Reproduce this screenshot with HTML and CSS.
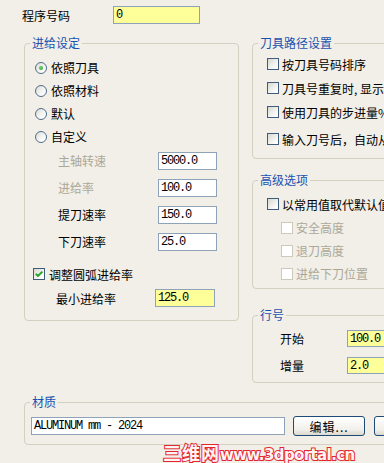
FILE: index.html
```html
<!DOCTYPE html>
<html lang="zh-CN">
<head>
    <meta charset="UTF-8">
    <title>刀具路径参数</title>
    <link rel="stylesheet" href="styles.css">
</head>
<body>
    <div class="dialog">
        <div class="prog-row">
            <span class="prog-label">程序号码</span>
            <span class="field yellow prog-input">0</span>
        </div>

        <div class="main">
            <!-- 进给设定 -->
            <fieldset class="group feed">
                <legend>进给设定</legend>
                <div class="group-body">
                    <div class="radio-row"><span class="radio on"></span>依照刀具</div>
                    <div class="radio-row"><span class="radio"></span>依照材料</div>
                    <div class="radio-row"><span class="radio"></span>默认</div>
                    <div class="radio-row"><span class="radio"></span>自定义</div>
                    <div class="fields">
                        <div class="field-row"><span class="field-label disabled">主轴转速</span><span class="field feed-input">5000.0</span></div>
                        <div class="field-row"><span class="field-label disabled">进给率</span><span class="field feed-input">100.0</span></div>
                        <div class="field-row"><span class="field-label">提刀速率</span><span class="field feed-input">150.0</span></div>
                        <div class="field-row"><span class="field-label">下刀速率</span><span class="field feed-input">25.0</span></div>
                    </div>
                    <div class="check-row arc-row">
                        <span class="check"><svg width="10" height="10" viewBox="0 0 10 10"><path d="M1.8 4.8 L4 7 L8.4 2.6" fill="none" stroke="#21a121" stroke-width="1.9"/></svg></span>调整圆弧进给率
                    </div>
                    <div class="field-row min-row"><span class="field-label">最小进给率</span><span class="field yellow feed-input">125.0</span></div>
                </div>
            </fieldset>

            <div class="right-col">
                <fieldset class="group path">
                    <legend>刀具路径设置</legend>
                    <div class="group-body">
                        <div class="check-row"><span class="check"></span>按刀具号码排序</div>
                        <div class="check-row"><span class="check"></span>刀具号重复时, 显示警告</div>
                        <div class="check-row"><span class="check"></span>使用刀具的步进量%</div>
                        <div class="check-row last"><span class="check"></span>输入刀号后，自动从刀库</div>
                    </div>
                </fieldset>

                <fieldset class="group adv">
                    <legend>高级选项</legend>
                    <div class="group-body">
                        <div class="check-row"><span class="check"></span>以常用值取代默认值</div>
                        <div class="check-row sub disabled"><span class="check off"></span>安全高度</div>
                        <div class="check-row sub disabled"><span class="check off"></span>退刀高度</div>
                        <div class="check-row sub disabled"><span class="check off"></span>进给下刀位置</div>
                    </div>
                </fieldset>

                <fieldset class="group lines">
                    <legend>行号</legend>
                    <div class="group-body">
                        <div class="line-row"><span class="line-label">开始</span><span class="field yellow line-input">100.0</span></div>
                        <div class="line-row"><span class="line-label">增量</span><span class="field yellow line-input">2.0</span></div>
                    </div>
                </fieldset>
            </div>
        </div>

        <!-- 材质 -->
        <fieldset class="group material">
            <legend>材质</legend>
            <div class="group-body mat-row">
                <span class="field mat-input">ALUMINUM mm - 2024</span>
                <span class="btn">编辑...</span>
                <span class="btn"></span>
            </div>
        </fieldset>
    </div>

    <div class="watermark"><span class="wm-cn">三维网</span>www.3dportal.cn</div>
</body>
</html>
```

FILE: styles.css
```css
html, body {
    margin: 0;
}
body {
    width: 384px;
    height: 463px;
    overflow: hidden;
    position: relative;
    background-color: #f1efe7;
    font-family: "Noto Sans CJK SC", sans-serif;
    font-size: 12px;
    color: #000;
}
.dialog {
    width: 600px;
    padding-top: 6px;
}

/* input boxes */
.field {
    box-sizing: border-box;
    height: 18px;
    border: 1px solid #8ea3b8;
    background-color: #fff;
    display: flex;
    align-items: center;
    padding-left: 2px;
    font-family: "Liberation Mono", monospace;
    font-size: 12px;
    letter-spacing: -1.2px;
    white-space: nowrap;
}
.yellow {
    background-color: #ffff99;
}

.prog-row {
    display: flex;
    align-items: center;
    height: 18px;
    padding-left: 22px;
}
.prog-label {
    width: 91px;
}
.prog-input {
    width: 87px;
}

.main {
    display: flex;
    align-items: flex-start;
    margin-top: 12px;
}

/* group boxes */
.group {
    margin: 0;
    padding: 0;
    min-width: 0;
    border: 1px solid #d3d0c2;
    border-radius: 4px;
}
.group legend {
    margin-left: 5px;
    padding: 0 2px;
    height: 14px;
    line-height: 14px;
    color: #1a52b0;
}

.feed {
    box-sizing: border-box;
    width: 215px;
    margin-left: 24px;
}
.feed .group-body {
    padding: 6px 0 11px 10px;
}
.radio-row {
    display: flex;
    align-items: center;
    height: 23px;
}
.radio {
    box-sizing: border-box;
    width: 12px;
    height: 12px;
    margin-right: 4px;
    border: 1px solid #4f6d8c;
    border-radius: 50%;
    background: linear-gradient(135deg, #dcdcd5, #fff 80%);
    display: flex;
    align-items: center;
    justify-content: center;
}
.radio.on::after {
    content: "";
    width: 4px;
    height: 4px;
    border-radius: 50%;
    background: radial-gradient(circle at 40% 40%, #6fd46f, #21a121);
}
.fields {
    margin-top: -1px;
}
.field-row {
    display: flex;
    align-items: center;
    height: 27px;
    padding-left: 23px;
}
.field-label {
    width: 100px;
}
.disabled {
    color: #aca899;
}
.feed-input {
    width: 59px;
}

.check-row {
    display: flex;
    align-items: center;
    height: 24px;
    white-space: nowrap;
}
.check {
    box-sizing: border-box;
    flex: none;
    width: 12px;
    height: 12px;
    margin-right: 3px;
    border: 1px solid #3e5c7c;
    background: linear-gradient(135deg, #d8d8d0, #fff 85%);
    display: flex;
    align-items: center;
    justify-content: center;
}
.check.off {
    border-color: #cdcabb;
    background: #fff;
}
.arc-row {
    height: 22px;
    margin-top: 8px;
    margin-left: -2px;
}
.arc-row .check {
    margin-right: 4px;
}
.min-row {
    height: 22px;
    margin-top: 2px;
    padding-left: 21px;
}
.min-row .field-label {
    width: 99px;
}
.min-row .feed-input {
    width: 60px;
}

.right-col {
    width: 320px;
    margin-left: 13px;
}
.path .group-body {
    padding: 2px 0 7px 14px;
}
.check-row.last {
    margin-top: 3px;
}
.adv {
    margin-top: 14px;
}
.adv .group-body {
    padding: 5px 0 3px 14px;
}
.check-row.sub {
    height: 23px;
    padding-left: 14px;
}
.lines {
    margin-top: 19px;
}
.lines .group-body {
    padding: 3px 0 3px 27px;
}
.line-row {
    display: flex;
    align-items: center;
    height: 27px;
}
.line-label {
    width: 67px;
}
.line-input {
    width: 60px;
    height: 17px;
}

.material {
    width: 420px;
    margin: 12px 0 0 24px;
}
.mat-row {
    display: flex;
    align-items: center;
    height: 20px;
    padding: 7px 0 8px 6px;
}
.mat-input {
    width: 257px;
}
.btn {
    box-sizing: border-box;
    width: 72px;
    height: 20px;
    margin-left: 8px;
    border: 1px solid #1d4a78;
    border-radius: 3px;
    background: linear-gradient(#ffffff, #f1f0ea 70%, #dcd8cc);
    display: flex;
    align-items: center;
    justify-content: center;
    letter-spacing: 1px;
}
.btn + .btn {
    margin-left: 9px;
}

.watermark {
    position: absolute;
    left: 163px;
    top: 442px;
    line-height: 20px;
    font-family: "DejaVu Sans", "Noto Sans CJK SC", sans-serif;
    font-weight: bold;
    font-size: 15px;
    letter-spacing: -0.6px;
    color: #fff4f4;
    -webkit-text-stroke: 2px #e3262d;
    paint-order: stroke fill;
    white-space: nowrap;
}
.wm-cn {
    font-family: "Noto Sans CJK SC", sans-serif;
    font-size: 18px;
    letter-spacing: 1px;
}
```
